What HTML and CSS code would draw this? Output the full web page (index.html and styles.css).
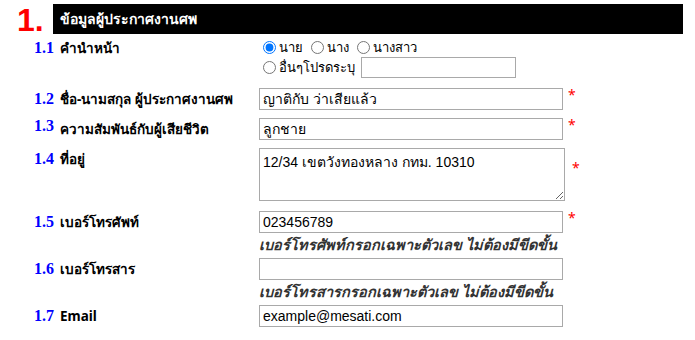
FILE: index.html
```html
<!DOCTYPE html>
<html lang="th">
<head>
    <meta charset="UTF-8">
    <title>ข้อมูลผู้ประกาศงานศพ</title>
    <link rel="stylesheet" href="styles.css">
</head>
<body>
    <div class="section-head">
        <span class="section-no">1.</span>
        <h2 class="section-title">ข้อมูลผู้ประกาศงานศพ</h2>
    </div>

    <form class="info-form">
        <div class="row row-title">
            <span class="num">1.1</span>
            <label class="label">คำนำหน้า</label>
            <div class="field radios">
                <div class="radio-line first">
                    <label><input type="radio" name="title" checked> นาย</label>
                    <label><input type="radio" name="title"> นาง</label>
                    <label><input type="radio" name="title"> นางสาว</label>
                </div>
                <div class="radio-line">
                    <label><input type="radio" name="title"> อื่นๆโปรดระบุ</label>
                    <input type="text" class="other-input">
                </div>
            </div>
        </div>

        <div class="row">
            <span class="num">1.2</span>
            <label class="label">ชื่อ-นามสกุล ผู้ประกาศงานศพ</label>
            <div class="field">
                <input type="text" value="ญาติกับ ว่าเสียแล้ว"><span class="req">*</span>
            </div>
        </div>

        <div class="row">
            <span class="num num-up">1.3</span>
            <label class="label">ความสัมพันธ์กับผู้เสียชีวิต</label>
            <div class="field">
                <input type="text" value="ลูกชาย"><span class="req">*</span>
            </div>
        </div>

        <div class="row row-area">
            <span class="num">1.4</span>
            <label class="label">ที่อยู่</label>
            <div class="field field-area">
                <textarea>12/34 เขตวังทองหลาง กทม. 10310</textarea><span class="req">*</span>
            </div>
        </div>

        <div class="row row-hint">
            <span class="num">1.5</span>
            <label class="label">เบอร์โทรศัพท์</label>
            <div class="field">
                <input type="text" value="023456789"><span class="req">*</span>
                <p class="hint">เบอร์โทรศัพท์กรอกเฉพาะตัวเลข ไม่ต้องมีขีดขั้น</p>
            </div>
        </div>

        <div class="row row-hint">
            <span class="num">1.6</span>
            <label class="label">เบอร์โทรสาร</label>
            <div class="field">
                <input type="text" value="">
                <p class="hint">เบอร์โทรสารกรอกเฉพาะตัวเลข ไม่ต้องมีขีดขั้น</p>
            </div>
        </div>

        <div class="row">
            <span class="num">1.7</span>
            <label class="label">Email</label>
            <div class="field">
                <input type="text" value="example@mesati.com">
            </div>
        </div>
    </form>
</body>
</html>
```

FILE: styles.css
```css
body {
    margin: 0;
    background-color: #fff;
    font-family: Tahoma, "Noto Sans", "DejaVu Sans", sans-serif;
    color: #000;
}

.section-head {
    display: flex;
    align-items: flex-start;
    padding: 4px 12px 0 17px;
}

.section-no {
    width: 36px;
    font-family: "Liberation Sans", Arial, sans-serif;
    font-weight: bold;
    font-size: 32px;
    line-height: 30px;
    color: #ff0000;
    padding-top: 1px;
}

.section-title {
    flex: 1;
    margin: 0;
    height: 30px;
    line-height: 30px;
    padding-left: 7px;
    background-color: #000;
    color: #fff;
    font-size: 14px;
    font-weight: bold;
}

.info-form {
    padding-left: 34px;
}

.row {
    display: grid;
    grid-template-columns: 26px 199px 1fr;
    align-items: start;
    margin-bottom: 8px;
}

.num {
    font-family: "Liberation Serif", "Times New Roman", serif;
    font-weight: bold;
    font-size: 16px;
    color: #0000ff;
    line-height: 22px;
}

.num-up {
    margin-top: -3px;
}

.label {
    font-size: 13.5px;
    font-weight: bold;
    line-height: 22px;
}

.field input[type="text"],
.field textarea {
    box-sizing: border-box;
    width: 304px;
    height: 22px;
    border: 1px solid #a9a9a9;
    padding: 1px 3px;
    font-family: "Liberation Sans", Arial, sans-serif;
    font-size: 14px;
    vertical-align: top;
}

.field textarea {
    width: 306px;
    height: 53px;
    padding: 2px 3px;
    resize: vertical;
}

.req {
    display: inline-block;
    margin-left: 5px;
    color: #ff0000;
    font-size: 14px;
    line-height: 14px;
    vertical-align: top;
}

.field-area .req {
    margin-left: 7px;
    margin-top: 13px;
}

.row-area {
    margin-bottom: 10px;
}

.hint {
    margin: 2px 0 0;
    font-size: 14.5px;
    font-style: italic;
    font-weight: bold;
    color: #333;
    line-height: 19px;
}

.row-title {
    margin-top: 2px;
    margin-bottom: 10px;
}

.row-title .num,
.row-title .label {
    padding-top: 0;
}

.radios {
    font-size: 13px;
}

.radio-line {
    display: flex;
    align-items: center;
    gap: 3px;
    height: 21px;
}

.radio-line.first {
    height: 20px;
}

.radio-line label {
    display: flex;
    align-items: center;
    margin-right: 1px;
}

.radio-line input[type="radio"] {
    width: 13px;
    height: 13px;
    margin: 0 3px 0 4px;
}

.radio-line input.other-input {
    width: 155px;
    height: 21px;
    margin-left: 2px;
}

.row-hint {
    margin-bottom: 4px;
}
```
